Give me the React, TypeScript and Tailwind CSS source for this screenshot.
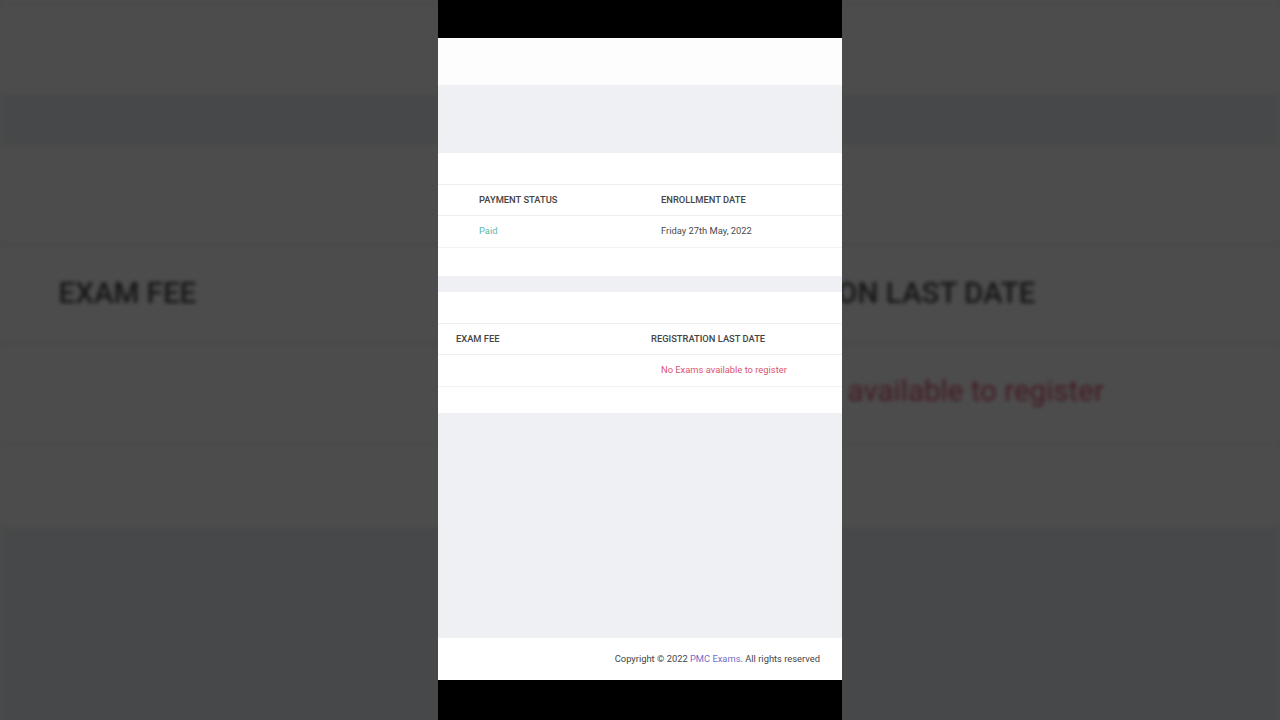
import React from 'react';

const font = { fontFamily: 'Roboto, "Liberation Sans", sans-serif' };

function HeaderCell({ children, className }: { children: React.ReactNode; className: string }) {
  return <div className={`font-medium uppercase text-[#444] ${className}`}>{children}</div>;
}

/** The phone screen content, rendered once in focus and once as the blurred backdrop. */
function Screen() {
  return (
    <div className="w-[404px] h-[720px] flex flex-col text-[9.35px] leading-none" style={font}>
      <div className="h-[38px] bg-black" />
      <div className="h-[47px] bg-[#fdfdfd]" />
      <div className="h-[68px] bg-[#eef0f4]" />

      {/* enrollment card */}
      <div className="bg-white pt-[31px] pb-[28px]">
        <div className="border-t border-[#eceef1]">
          <div className="flex items-center h-[31px] border-b border-[#eceef1]">
            <HeaderCell className="w-[223px] pl-[41px]">Payment Status</HeaderCell>
            <HeaderCell className="flex-1">Enrollment Date</HeaderCell>
          </div>
          <div className="flex items-center h-[32px] pb-[2px] border-b border-[#f1f2f4]">
            <div className="w-[223px] pl-[41px] text-[#5db9ab]">Paid</div>
            <div className="flex-1 text-[#4a4a4a]">Friday 27th May, 2022</div>
          </div>
        </div>
      </div>

      <div className="h-[16px] bg-[#eef0f4]" />

      {/* exams card */}
      <div className="bg-white pt-[31px] pb-[26px]">
        <div className="border-t border-[#eceef1]">
          <div className="flex items-center h-[31px] border-b border-[#eceef1]">
            <HeaderCell className="w-[213px] pl-[18px]">Exam Fee</HeaderCell>
            <HeaderCell className="flex-1">Registration Last Date</HeaderCell>
          </div>
          <div className="flex items-center h-[32px] pb-[2px] border-b border-[#f1f2f4]">
            <div className="w-[223px]" />
            <div className="flex-1 text-[#db5472]">No Exams available to register</div>
          </div>
        </div>
      </div>

      <div className="flex-1 bg-[#eef0f4]" />

      <div className="h-[42px] bg-white flex items-center justify-end pr-[22px] text-[#444]">
        Copyright © 2022&nbsp;<span className="text-[#6f6fc9]">PMC Exams</span>. All rights reserved
      </div>
      <div className="h-[40px] bg-black" />
    </div>
  );
}

export default function App() {
  return (
    <div className="relative w-full h-[720px] overflow-hidden bg-[#4a4a4a]">
      <div aria-hidden className="absolute inset-0 blur-[2px] brightness-[0.3]">
        <div className="w-full h-full flex items-center justify-center">
          <div className="scale-[3.16] shrink-0">
            <Screen />
          </div>
        </div>
      </div>
      <div className="relative flex justify-center">
        <Screen />
      </div>
    </div>
  );
}
